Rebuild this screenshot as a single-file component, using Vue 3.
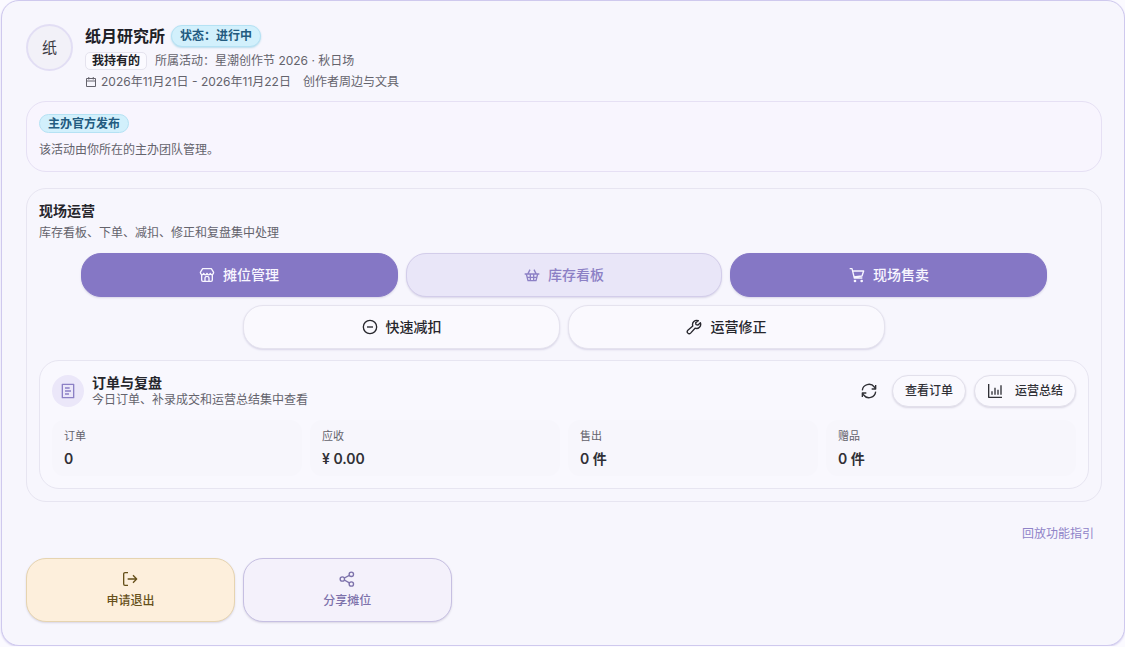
<script setup>
const stats = [
  { label: '订单', value: '0' },
  { label: '应收', value: '¥ 0.00' },
  { label: '售出', value: '0 件' },
  { label: '赠品', value: '0 件' },
]
</script>

<template>
  <main class="booth">
    <header class="head">
      <div class="avatar">纸</div>
      <div class="info">
        <div class="line title-line">
          <h1>纸月研究所</h1>
          <span class="pill status">状态：进行中</span>
        </div>
        <div class="line owner-line">
          <span class="tag">我持有的</span>
          <span>所属活动：星潮创作节 2026 · 秋日场</span>
        </div>
        <div class="line date-line">
          <span class="date">
            <svg class="i12" viewBox="0 0 24 24" aria-hidden="true">
              <path d="M3 5h18v16H3zM3 10h18M7.500 2v5M16.500 2v5" />
            </svg>
            2026年11月21日 - 2026年11月22日
          </span>
          <span>创作者周边与文具</span>
        </div>
      </div>
    </header>

    <section class="panel notice">
      <span class="pill">主办官方发布</span>
      <p>该活动由你所在的主办团队管理。</p>
    </section>

    <section class="panel ops">
      <h2>现场运营</h2>
      <p class="desc">库存看板、下单、减扣、修正和复盘集中处理</p>

      <div class="actions">
        <button type="button" class="action primary">
          <svg class="i16" viewBox="0 0 24 24" aria-hidden="true">
            <path d="M5.500 2.500h13L22 8c0 4-4.500 4.500-5 1.500-1 3-4 3-5 0-1 3-4 3-5 0C6.500 12.500 2 12 2 8zM4 12v7.500a2 2 0 0 0 2 2h12a2 2 0 0 0 2-2V12M9 21.500V17a3 3 0 0 1 6 0v4.500" />
          </svg>
          摊位管理
        </button>
        <button type="button" class="action soft">
          <svg class="i16" viewBox="0 0 24 24" aria-hidden="true">
            <path d="M1 10.500h22M3.500 10.500l2.500 10h12l2.500-10M6 10l3-6M18 10l-3-6M5 15.500h14M9.500 10.500v10M14.500 10.500v10" />
          </svg>
          库存看板
        </button>
        <button type="button" class="action primary">
          <svg class="i16" viewBox="0 0 24 24" aria-hidden="true">
            <path d="M1 2.500h3.500L8 16.500h12M5.500 6H22l-2.500 7.500L7.500 15" />
            <circle class="dot" cx="9" cy="21" r="2" />
            <circle class="dot" cx="19" cy="21" r="2" />
          </svg>
          现场售卖
        </button>
        <button type="button" class="action plain">
          <svg class="i16" viewBox="0 0 24 24" aria-hidden="true">
            <circle cx="12" cy="12" r="10" />
            <path d="M7.500 12h9" />
          </svg>
          快速减扣
        </button>
        <button type="button" class="action plain">
          <svg class="i16" viewBox="0 0 24 24" aria-hidden="true">
            <path d="M18.500 2.500a6.300 6.300 0 0 0-8.300 8L2.800 17a2.900 2.900 0 0 0 4.100 4.200l6.700-7.400a6.300 6.300 0 0 0 8-8.200L18 9l-3-.5-.5-2.800z" />
          </svg>
          运营修正
        </button>
      </div>

      <section class="orders">
        <div class="orders-head">
          <span class="badge">
            <svg class="i16" viewBox="0 0 24 24" aria-hidden="true">
              <path d="M3.500 2h17v20h-17zM7.500 7.500h7M7.500 12h9M7.500 16.500h6" />
            </svg>
          </span>
          <div class="orders-text">
            <h3>订单与复盘</h3>
            <p>今日订单、补录成交和运营总结集中查看</p>
          </div>
          <div class="tools">
            <button type="button" class="icon-btn" aria-label="刷新">
              <svg class="i16" viewBox="0 0 24 24" aria-hidden="true">
                <path d="M2 11A10 10 0 0 1 20 6l2 3M22 3v6h-6M22 13a10 10 0 0 1-18 5l-2-3M2 21v-6h6" />
              </svg>
            </button>
            <button type="button" class="small">查看订单</button>
            <button type="button" class="small with-icon">
              <svg class="i16" viewBox="0 0 24 24" aria-hidden="true">
                <path d="M2.500 1.500v20h20M7.500 17.500v-5M12 17.500V7M16.500 17.500V10M21 17.500v-14" />
              </svg>
              运营总结
            </button>
          </div>
        </div>
        <dl class="stats">
          <div v-for="s in stats" :key="s.label" class="stat">
            <dt>{{ s.label }}</dt>
            <dd>{{ s.value }}</dd>
          </div>
        </dl>
      </section>
    </section>

    <div class="guide"><a href="#guide">回放功能指引</a></div>

    <footer class="foot">
      <button type="button" class="tile warn">
        <svg class="i16" viewBox="0 0 24 24" aria-hidden="true">
          <path d="M9 2.500H4.500a2 2 0 0 0-2 2v15a2 2 0 0 0 2 2H9M8.500 12H22M16.500 6.500L22 12l-5.500 5.500" />
        </svg>
        申请退出
      </button>
      <button type="button" class="tile share">
        <svg class="i16" viewBox="0 0 24 24" aria-hidden="true">
          <circle cx="5" cy="12" r="3.300" />
          <circle cx="18.500" cy="5" r="3.300" />
          <circle cx="18.500" cy="19.500" r="3.300" />
          <path d="M8 10.500l7.500-4M8 13.500l7.500 4.300" />
        </svg>
        分享摊位
      </button>
    </footer>
  </main>
</template>

<style>
body {
  margin: 0;
  background: #fbfaff;
}
</style>

<style scoped>
.booth,
.booth * {
  box-sizing: border-box;
}

.booth {
  margin-left: 1px;
  padding: 23px 22px 23px 24px;
  border: 1px solid #cfc9ee;
  border-radius: 18px;
  background: #f7f6fd;
  box-shadow: 0 1px 2px #d5d0ef;
  color: #64636c;
  font: 12px/18px Inter, "Noto Sans CJK SC", sans-serif;
}

h1, h2, h3, p, dl, dd {
  margin: 0;
}

button {
  font: inherit;
  cursor: pointer;
}

svg {
  flex: none;
  fill: none;
  stroke: currentColor;
  stroke-width: 2;
  stroke-linejoin: round;
}

.dot {
  fill: currentColor;
  stroke: none;
}

.i12 {
  width: 12px;
  height: 12px;
}

.i16 {
  width: 16px;
  height: 16px;
}

.head {
  display: flex;
  align-items: flex-start;
  gap: 12px;
}

.avatar {
  display: flex;
  align-items: center;
  justify-content: center;
  width: 47px;
  height: 47px;
  border: 2px solid #e2def4;
  border-radius: 50%;
  background: #f2f1f8;
  color: #3b3a42;
  font-size: 15px;
}

.line {
  display: flex;
  align-items: center;
}

.title-line {
  height: 24px;
  gap: 6px;
}

.owner-line {
  height: 18px;
  margin-top: 4px;
  gap: 8px;
}

.date-line {
  margin-top: 3px;
  gap: 12px;
}

.date {
  display: flex;
  align-items: center;
  gap: 4px;
}

h1 {
  color: #202026;
  font-size: 16px;
  font-weight: 600;
  line-height: 22px;
}

.pill {
  display: inline-block;
  padding: 0 8px;
  border: 1px solid #b5e2f4;
  border-radius: 12px;
  background: #d2f0fc;
  color: #235b80;
  font-weight: 600;
  line-height: 17px;
}

.status {
  line-height: 20px;
  box-shadow: 0 1px 2px #b9dcec;
}

.tag {
  padding: 0 6px;
  border: 1px solid #e5e3ee;
  border-radius: 5px;
  background: #fbfaff;
  color: #202026;
  font-weight: 600;
  line-height: 16px;
}

.panel {
  padding: 12px;
  border: 1px solid #e7e5f1;
  border-radius: 20px;
}

.notice {
  display: flex;
  flex-direction: column;
  align-items: flex-start;
  gap: 8px;
  margin-top: 10px;
  padding: 12px;
  border-color: #e6e0f4;
  background: #f8f5fe;
}

.ops {
  margin-top: 16px;
}

h2, h3 {
  color: #26262c;
  font-size: 14px;
  font-weight: 600;
  line-height: 20px;
}

.desc {
  margin-top: 3px;
}

.actions {
  display: flex;
  flex-wrap: wrap;
  justify-content: center;
  gap: 8px;
  max-width: 967px;
  margin: 11px auto 0;
}

.action {
  display: flex;
  align-items: center;
  justify-content: center;
  gap: 8px;
  width: calc((100% - 16px) / 3);
  height: 44px;
  padding: 0 12px;
  border: 1px solid;
  border-radius: 20px;
  font-size: 14px;
  font-weight: 500;
  box-shadow: 0 1px 2px #d9d6e8;
}

.primary {
  border-color: #8577c5;
  background: #8577c5;
  color: #f8f6ff;
}

.soft {
  border-color: #d3cdea;
  background: #e9e6f8;
  color: #8c80c5;
}

.plain {
  border-color: #e5e3ee;
  background: #faf9fe;
  color: #26262c;
}

.orders {
  margin-top: 11px;
  padding: 13px 12px 12px;
  border: 1px solid #e7e5f1;
  border-radius: 20px;
  background: #f9f8fe;
}

.orders-head {
  display: flex;
  align-items: center;
  gap: 8px;
}

.badge {
  display: flex;
  align-items: center;
  justify-content: center;
  width: 32px;
  height: 32px;
  border-radius: 50%;
  background: #ebe7f9;
  color: #8c80c5;
}

.orders-text {
  flex: 1;
}

h3 {
  line-height: 18px;
}

.orders-text p {
  line-height: 16px;
}

.tools {
  display: flex;
  gap: 8px;
}

.icon-btn,
.small {
  display: flex;
  align-items: center;
  justify-content: center;
  height: 32px;
  color: #303036;
}

.icon-btn {
  width: 30px;
  padding: 0;
  border: 0;
  background: none;
}

.small {
  gap: 12px;
  padding: 0 12px;
  border: 1px solid #e2e0eb;
  border-radius: 16px;
  background: #faf9fe;
  font-weight: 500;
  box-shadow: 0 1px 2px #d9d6e3;
}

.stats {
  display: grid;
  grid-template-columns: repeat(4, 1fr);
  gap: 8px;
  margin-top: 12px;
}

.stat {
  padding: 8px 12px 7px;
  border-radius: 12px;
  background: #f7f6fc;
}

dt {
  font-size: 11px;
  line-height: 16px;
}

dd {
  margin-top: 5px;
  color: #303036;
  font-size: 14px;
  font-weight: 600;
  line-height: 20px;
}

.guide {
  display: flex;
  justify-content: flex-end;
  margin-top: 22px;
  padding: 0 8px;
}

.guide a {
  color: #8f83c8;
  line-height: 20px;
  text-decoration: none;
}

.foot {
  display: grid;
  grid-template-columns: repeat(5, 1fr);
  gap: 8px;
  margin-top: 14px;
}

.tile {
  display: flex;
  flex-direction: column;
  align-items: center;
  justify-content: center;
  gap: 5px;
  height: 64px;
  border: 1px solid;
  border-radius: 20px;
  font-weight: 500;
  box-shadow: 0 1px 2px #d9d6e3;
}

.warn {
  border-color: #e6d4b0;
  background: #fdefdc;
  color: #66501a;
}

.share {
  border-color: #c6bfe2;
  background: #f4f1fb;
  color: #7d72ab;
}
</style>
